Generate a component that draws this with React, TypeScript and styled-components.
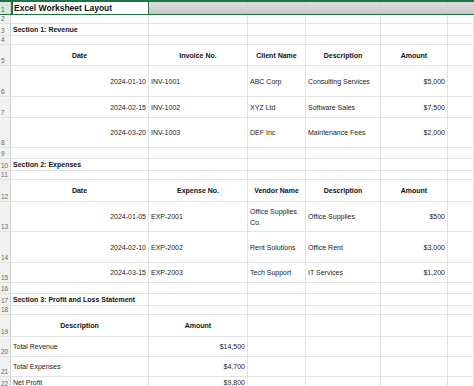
import React from 'react'
import styled, { createGlobalStyle, css } from 'styled-components'

const GlobalStyle = createGlobalStyle`
  html, body {
    margin: 0;
    padding: 0;
    background: #ffffff;
  }
  body {
    font-family: "Liberation Sans", Arial, sans-serif;
    overflow: hidden;
  }
`

const COLS = '11px 138px 99px 58px 75px 67px 1fr'
const GREEN = '#217346'
const GRID = '#e2e2e2'

const Sheet = styled.div`
  width: 474px;
  height: 386px;
  overflow: hidden;
  background: #fff;
`

const Row = styled.div<{ $h: number; $active?: boolean }>`
  display: grid;
  grid-template-columns: ${COLS};
  height: ${p => p.$h}px;
  box-sizing: border-box;
  ${p =>
    p.$active &&
    css`
      border-top: 2px solid ${GREEN};
      border-bottom: 1px solid ${GREEN};
    `}
`

const RowHead = styled.div<{ $active?: boolean }>`
  display: flex;
  align-items: flex-end;
  padding: 0 0 1px 1px;
  box-sizing: border-box;
  font-size: 6.5px;
  line-height: 1;
  color: ${p => (p.$active ? GREEN : '#666')};
  background: ${p => (p.$active ? '#d8e8dd' : '#f2f2f2')};
  border-right: 1px solid #d0d0d0;
  border-bottom: ${p => (p.$active ? 'none' : '1px solid #e0e0e0')};
`

type Align = 'left' | 'center' | 'right'

const Cell = styled.div<{ $align?: Align; $bold?: boolean; $wrap?: boolean; $fill?: boolean; $title?: boolean }>`
  display: flex;
  align-items: center;
  justify-content: ${p => (p.$align === 'right' ? 'flex-end' : p.$align === 'center' ? 'center' : 'flex-start')};
  text-align: ${p => p.$align || 'left'};
  padding: 0 2px;
  box-sizing: border-box;
  min-width: 0;
  overflow: visible;
  white-space: ${p => (p.$wrap ? 'normal' : 'nowrap')};
  font-size: 7px;
  line-height: 11px;
  font-weight: ${p => (p.$bold ? 700 : 400)};
  color: ${p => (p.$bold ? '#111' : '#222')};
  border-right: 1px solid ${GRID};
  border-bottom: 1px solid ${GRID};
  ${p =>
    p.$fill &&
    css`
      background: linear-gradient(#dedede, #c6c6c6);
      border-right-color: #d2d2d2;
      border-bottom: none;
    `}
  ${p =>
    p.$title &&
    css`
      font-size: 8.5px;
      border-left: 2px solid ${GREEN};
      border-right: 1px solid ${GREEN};
      border-bottom: none;
      padding-left: 1px;
    `}
`

type CellDef = { text?: string; align?: Align; bold?: boolean; wrap?: boolean }
type RowDef = { h: number; cells?: CellDef[] }

const blank: CellDef = {}

const head = (labels: string[]): CellDef[] => labels.map(text => ({ text, align: 'center', bold: true }))

const detail = (a: string, b: string, c: string, d: string, e: string, wrapC = false): CellDef[] => [
  { text: a, align: 'right' },
  { text: b },
  { text: c, wrap: wrapC },
  { text: d },
  { text: e, align: 'right' },
]

const section = (text: string): CellDef[] => [{ text, bold: true }]

const rows: RowDef[] = [
  { h: 9 },
  { h: 12, cells: section('Section 1: Revenue') },
  { h: 9 },
  { h: 21, cells: head(['Date', 'Invoice No.', 'Client Name', 'Description', 'Amount']) },
  { h: 31, cells: detail('2024-01-10', 'INV-1001', 'ABC Corp', 'Consulting Services', '$5,000') },
  { h: 21, cells: detail('2024-02-15', 'INV-1002', 'XYZ Ltd', 'Software Sales', '$7,500') },
  { h: 30, cells: detail('2024-03-20', 'INV-1003', 'DEF Inc', 'Maintenance Fees', '$2,000') },
  { h: 11 },
  { h: 12, cells: section('Section 2: Expenses') },
  { h: 9 },
  { h: 22, cells: head(['Date', 'Expense No.', 'Vendor Name', 'Description', 'Amount']) },
  { h: 30, cells: detail('2024-01-05', 'EXP-2001', 'Office Supplies Co.', 'Office Supplies', '$500', true) },
  { h: 31, cells: detail('2024-02-10', 'EXP-2002', 'Rent Solutions', 'Office Rent', '$3,000') },
  { h: 20, cells: detail('2024-03-15', 'EXP-2003', 'Tech Support', 'IT Services', '$1,200') },
  { h: 11 },
  { h: 11, cells: section('Section 3: Profit and Loss Statement') },
  { h: 10 },
  { h: 22, cells: head(['Description', 'Amount']) },
  { h: 20, cells: [{ text: 'Total Revenue' }, { text: '$14,500', align: 'right' }] },
  { h: 20, cells: [{ text: 'Total Expenses' }, { text: '$4,700', align: 'right' }] },
  { h: 10, cells: [{ text: 'Net Profit' }, { text: '$9,800', align: 'right' }] },
]

export default function App() {
  return (
    <>
      <GlobalStyle />
      <Sheet>
        <Row $h={15} $active>
          <RowHead $active>1</RowHead>
          <Cell $bold $title>Excel Worksheet Layout</Cell>
          {[0, 1, 2, 3, 4].map(i => (
            <Cell key={i} $fill />
          ))}
        </Row>
        {rows.map((row, r) => {
          const cells = row.cells || []
          return (
            <Row key={r} $h={row.h}>
              <RowHead>{r + 2}</RowHead>
              {[0, 1, 2, 3, 4, 5].map(c => {
                const def = cells[c] || blank
                return (
                  <Cell key={c} $align={def.align} $bold={def.bold} $wrap={def.wrap}>
                    {def.text}
                  </Cell>
                )
              })}
            </Row>
          )
        })}
      </Sheet>
    </>
  )
}
